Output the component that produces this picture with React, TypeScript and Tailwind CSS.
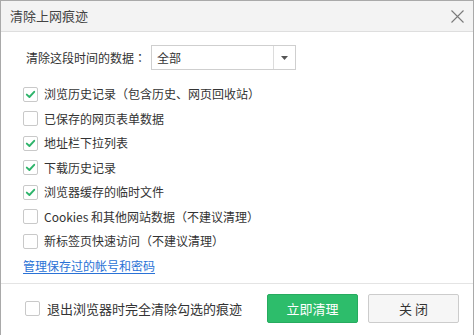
import React from "react";

const FONT = {
  fontFamily: '"Microsoft YaHei", "Noto Sans CJK SC", "Noto Sans", sans-serif',
};

type ItemProps = { label: string; checked?: boolean };

function Box({ checked }: { checked?: boolean }) {
  return (
    <span className="flex h-[15px] w-[15px] shrink-0 items-center justify-center rounded-[2px] border border-[#c9c9c9] bg-white">
      {checked ? (
        <svg width="11" height="11" viewBox="0 0 11 11" fill="none">
          <path
            d="M1.8 5.6 L4.4 8 L9.2 2.8"
            stroke="#2eb46b"
            strokeWidth="1.9"
            strokeLinecap="round"
            strokeLinejoin="round"
          />
        </svg>
      ) : null}
    </span>
  );
}

function Item({ label, checked }: ItemProps) {
  return (
    <div className="flex h-[24.5px] items-center gap-[6px] text-[12px] text-[#333]">
      <Box checked={checked} />
      <span>{label}</span>
    </div>
  );
}

const items: ItemProps[] = [
  { label: "浏览历史记录（包含历史、网页回收站）", checked: true },
  { label: "已保存的网页表单数据" },
  { label: "地址栏下拉列表", checked: true },
  { label: "下载历史记录", checked: true },
  { label: "浏览器缓存的临时文件", checked: true },
  { label: "Cookies 和其他网站数据（不建议清理）" },
  { label: "新标签页快速访问（不建议清理）" },
];

export default function App() {
  return (
    <div
      className="h-[335px] w-[474px] overflow-hidden border-x border-t border-[#a9a9a9] bg-white"
      style={FONT}
    >
      {/* title bar */}
      <div className="flex h-[31px] items-center justify-between border-b border-[#dedede] bg-[#f3f3f3] pl-[9px] pr-[8px]">
        <span className="text-[13px] text-[#444]">清除上网痕迹</span>
        <svg width="13" height="13" viewBox="0 0 13 13" className="mr-[1px]">
          <path d="M0.5 0.5 L12.5 12.5 M12.5 0.5 L0.5 12.5" stroke="#7a7a7a" strokeWidth="1.1" />
        </svg>
      </div>

      <div className="pl-[22px]">
        {/* time range */}
        <div className="mt-[13px] flex h-[25px] items-center">
          <span className="ml-[3px] w-[125px] text-[12px] text-[#333]">
            清除这段时间的数据
            <span className="font-['Noto_Sans_CJK_JP']">：</span>
          </span>
          <div className="flex h-[25px] w-[145px] items-center border border-[#cfcfcf] bg-white">
            <span className="flex-1 pl-[5px] text-[12px] text-[#333]">全部</span>
            <span className="flex h-full w-[22px] items-center justify-center border-l border-[#dcdcdc]">
              <svg width="7" height="4" viewBox="0 0 7 4">
                <path d="M0 0 H7 L3.5 4 Z" fill="#555" />
              </svg>
            </span>
          </div>
        </div>

        <div className="mt-[11.75px]">
          {items.map((it) => (
            <Item key={it.label} label={it.label} checked={it.checked} />
          ))}
          <div className="flex h-[24.5px] items-center">
            <a href="#" className="text-[12px] text-[#2a72d6] underline underline-offset-2">
              管理保存过的帐号和密码
            </a>
          </div>
        </div>
      </div>

      {/* footer */}
      <div className="mt-[5px] flex h-[50px] items-center border-t border-[#e4e4e4] pl-[24px]">
        <div className="flex flex-1 items-center gap-[7px] text-[13px] text-[#333]">
          <Box />
          <span>退出浏览器时完全清除勾选的痕迹</span>
        </div>
        <div className="mr-[14px] flex items-center gap-[10px]">
          <button className="h-[29px] w-[91px] rounded-[2px] border border-[#27ab5f] bg-[#2dbd6b] text-[13px] text-white">
            立即清理
          </button>
          <button className="h-[29px] w-[91px] rounded-[2px] border border-[#cccccc] bg-[#f6f6f6] text-[13px] text-[#333]">
            关 闭
          </button>
        </div>
      </div>
    </div>
  );
}
